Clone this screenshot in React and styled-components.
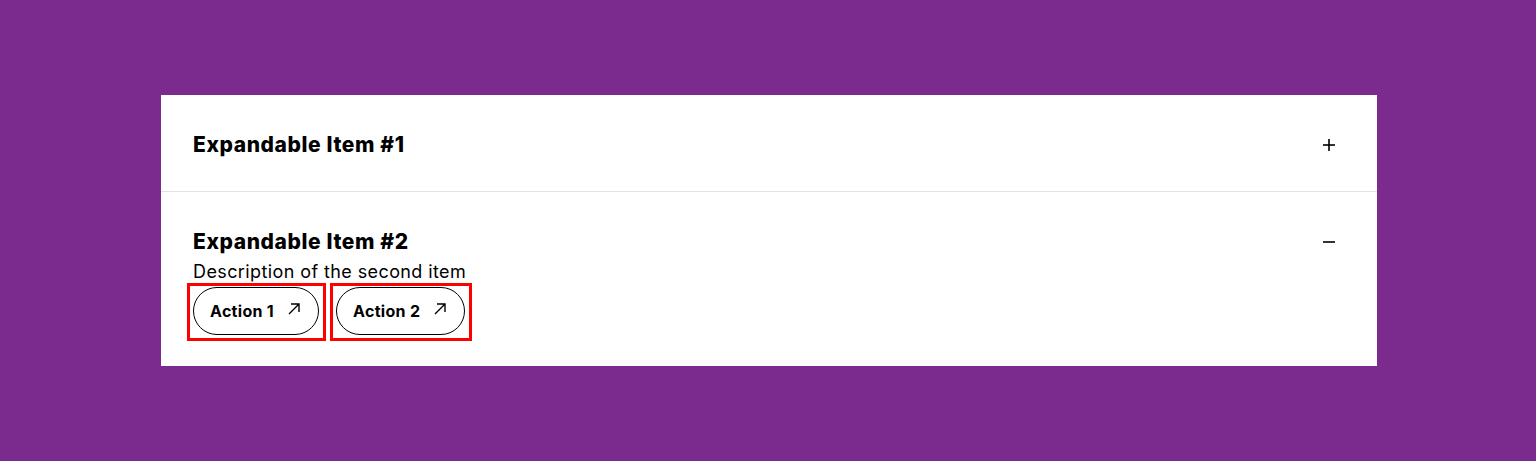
import React from "react";
import styled, { createGlobalStyle } from "styled-components";

const GlobalStyle = createGlobalStyle`
  html, body {
    margin: 0;
    padding: 0;
    background: #7b2a8e;
    font-family: Inter, "Noto Sans", sans-serif;
    color: #000;
  }
`;

const Page = styled.div`
  min-height: 461px;
  padding: 95px 159px 0 161px;
  box-sizing: border-box;
`;

const Accordion = styled.div`
  background: #fff;
  width: 1216px;
`;

const Item = styled.div`
  padding: ${(p) => (p.open ? "34px 40px 25px 32px" : "34px 40px 30px 32px")};
  border-top: ${(p) => (p.first ? "none" : "1px solid #e3e3e3")};
`;

const Header = styled.div`
  display: flex;
  align-items: center;
  justify-content: space-between;
  height: 32px;
`;

const Title = styled.h3`
  margin: 0;
  font-size: 21px;
  font-weight: 800;
  letter-spacing: 0.6px;
  line-height: 32px;
`;

const Description = styled.p`
  margin: 2px 0 0;
  font-size: 18px;
  line-height: 24px;
  font-weight: 400;
  letter-spacing: 0.4px;
`;

const Actions = styled.div`
  display: flex;
  gap: 4px;
  margin: -1px 0 0 -6px;
`;

const FocusRing = styled.span`
  display: inline-flex;
  border: 3px solid #ff0000;
  padding: 1px 4px 3px 3px;
`;

const ActionButton = styled.button`
  display: inline-flex;
  align-items: center;
  gap: 12px;
  height: 48px;
  padding: 0 16px 4px 16px;
  box-sizing: border-box;
  border: 1px solid #000;
  border-radius: 24px;
  background: #fff;
  font-family: inherit;
  font-size: 16px;
  font-weight: 700;
  letter-spacing: 0.3px;
  color: #000;
  cursor: pointer;
`;

const Label = styled.span`
  padding-top: 4px;
`;

const Toggle = ({ open }) => (
  <svg width="16" height="16" viewBox="0 0 16 16">
    <path d="M2 8h12" stroke="#000" strokeWidth="1.6" />
    {!open && <path d="M8 2v12" stroke="#000" strokeWidth="1.6" />}
  </svg>
);

const Arrow = () => (
  <svg width="16" height="16" viewBox="0 0 16 16" fill="none">
    <path d="M3 13L13 3M5 3h8v8" stroke="#000" strokeWidth="1.4" />
  </svg>
);

const actions = ["Action 1", "Action 2"];

export default function App() {
  return (
    <>
      <GlobalStyle />
      <Page>
        <Accordion>
          <Item first>
            <Header>
              <Title>Expandable Item #1</Title>
              <Toggle />
            </Header>
          </Item>
          <Item open>
            <Header>
              <Title>Expandable Item #2</Title>
              <Toggle open />
            </Header>
            <Description>Description of the second item</Description>
            <Actions>
              {actions.map((a) => (
                <FocusRing key={a}>
                  <ActionButton>
                    <Label>{a}</Label>
                    <Arrow />
                  </ActionButton>
                </FocusRing>
              ))}
            </Actions>
          </Item>
        </Accordion>
      </Page>
    </>
  );
}
